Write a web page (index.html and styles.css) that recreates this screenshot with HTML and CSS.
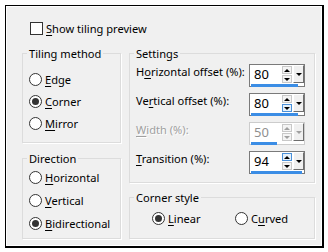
FILE: index.html
```html
<!DOCTYPE html>
<html lang="en">
<head>
  <meta charset="UTF-8" />
  <title>Tiling</title>
  <link rel="stylesheet" href="styles.css">
</head>
<body>
  <div class="dialog">
    <div class="check"><span class="box"></span><span><u>S</u>how tiling preview</span></div>

    <div class="columns">
      <div class="col col-left">
        <div class="group tiling">
          <div class="legend">Tiling method</div>
          <div class="radios">
            <div class="radio"><span class="circle"></span><span><u>E</u>dge</span></div>
            <div class="radio on"><span class="circle"></span><span><u>C</u>orner</span></div>
            <div class="radio"><span class="circle"></span><span><u>M</u>irror</span></div>
          </div>
        </div>
        <div class="group direction">
          <div class="legend">Direction</div>
          <div class="radios">
            <div class="radio"><span class="circle"></span><span><u>H</u>orizontal</span></div>
            <div class="radio"><span class="circle"></span><span><u>V</u>ertical</span></div>
            <div class="radio on"><span class="circle"></span><span><u>B</u>idirectional</span></div>
          </div>
        </div>
      </div>

      <div class="col col-right">
        <div class="group settings">
          <div class="legend">Settings</div>
          <div class="fields">
            <div class="field">
              <span class="label">H<u>o</u>rizontal offset (%):</span>
              <div class="spin">
                <div class="spin-top">
                  <span class="spin-value">80</span>
                  <span class="spin-arrows"><span class="btn"><i class="up"></i></span><span class="btn"><i class="down"></i></span></span>
                  <span class="spin-drop"><i class="down"></i></span>
                </div>
                <div class="spin-bar" style="width: 47px"></div>
              </div>
            </div>
            <div class="field">
              <span class="label">Ve<u>r</u>tical offset (%):</span>
              <div class="spin">
                <div class="spin-top">
                  <span class="spin-value">80</span>
                  <span class="spin-arrows"><span class="btn"><i class="up"></i></span><span class="btn hot"><i class="down"></i></span></span>
                  <span class="spin-drop"><i class="down"></i></span>
                </div>
                <div class="spin-bar" style="width: 47px"></div>
              </div>
            </div>
            <div class="field disabled">
              <span class="label"><u>W</u>idth (%):</span>
              <div class="spin">
                <div class="spin-top">
                  <span class="spin-value">50</span>
                  <span class="spin-arrows"><span class="btn"><i class="up"></i></span><span class="btn"><i class="down"></i></span></span>
                  <span class="spin-drop"><i class="down"></i></span>
                </div>
                <div class="spin-bar" style="width: 26px"></div>
              </div>
            </div>
            <div class="field">
              <span class="label"><u>T</u>ransition (%):</span>
              <div class="spin">
                <div class="spin-top">
                  <span class="spin-value">94</span>
                  <span class="spin-arrows"><span class="btn hot"><i class="up"></i></span><span class="btn"><i class="down"></i></span></span>
                  <span class="spin-drop"><i class="down"></i></span>
                </div>
                <div class="spin-bar" style="width: 51px"></div>
              </div>
            </div>
          </div>
        </div>
        <div class="group corner">
          <div class="legend">Corner style</div>
          <div class="radios row">
            <div class="radio on"><span class="circle"></span><span><u>L</u>inear</span></div>
            <div class="radio"><span class="circle"></span><span>C<u>u</u>rved</span></div>
          </div>
        </div>
      </div>
    </div>
  </div>
</body>
</html>
```

FILE: styles.css
```css
* {
  box-sizing: border-box;
}

body {
  margin: 0;
  background: #fff;
  font-family: "Noto Sans", "Open Sans", sans-serif;
  font-size: 11.1px;
  color: #000;
  white-space: nowrap;
}

u {
  text-decoration-thickness: 1px;
  text-underline-offset: 2px;
}

.dialog {
  margin: 5px 0 0 5px;
  width: 319px;
  height: 243px;
  background: #f0f0f0;
  border: solid #000;
  border-width: 1px 2px 2px 1px;
  box-shadow: inset 1px 1px 0 #fff, inset -1px -1px 0 #fff;
  padding: 16px 0 0 16px;
}

.check {
  display: flex;
  align-items: center;
  gap: 3px;
  height: 13px;
  padding-left: 8px;
}

.box {
  width: 13px;
  height: 13px;
  border: 1px solid #333;
  background: #fff;
}

.columns {
  display: flex;
  gap: 8px;
  margin-top: 18px;
}

.col {
  display: flex;
  flex-direction: column;
}

.col-left {
  width: 99px;
  gap: 15px;
}

.col-right {
  width: 186px;
  gap: 14px;
}

.group {
  border: 1px solid #dcdcdc;
  box-shadow: 1px 1px 0 #fff;
}

.tiling { height: 90px; }
.direction { height: 81px; }
.settings { height: 130px; }
.corner { height: 42px; }

.legend {
  display: table;
  margin: -7px 0 0 4px;
  padding: 0 2px;
  line-height: 14px;
  background: #f0f0f0;
}

.radios {
  display: flex;
  flex-direction: column;
  padding-left: 6px;
}

.tiling .radios { margin-top: 7px; }
.direction .radio { height: 23px; }

.radio {
  display: flex;
  align-items: center;
  gap: 3px;
  height: 22px;
}

.circle {
  width: 13px;
  height: 13px;
  border: 1px solid #333;
  border-radius: 50%;
  background: #fff;
  display: flex;
  align-items: center;
  justify-content: center;
}

.radio.on .circle::after {
  content: "";
  width: 7px;
  height: 7px;
  border-radius: 50%;
  background: #333;
}

.radios.row {
  flex-direction: row;
  margin-top: 2px;
  padding-left: 22px;
}

.radios.row .radio:first-child {
  width: 83px;
}

/* settings fields */
.fields {
  display: flex;
  flex-direction: column;
  gap: 6px;
  margin-top: 3px;
  padding: 0 9px 0 6px;
}

.field {
  display: flex;
  align-items: flex-start;
  justify-content: space-between;
}

.label {
  line-height: 16px;
}

.spin {
  width: 56px;
  height: 23px;
  border: 1px solid #7a7a7a;
  background: #fff;
}

.spin-top {
  display: flex;
  height: 18px;
}

.spin-value {
  flex: 1;
  padding-left: 4px;
  font-size: 13px;
  line-height: 19px;
}

.spin-arrows {
  width: 10px;
  display: flex;
  flex-direction: column;
  gap: 1px;
  padding-top: 1px;
  margin-right: 1px;
}

.spin-arrows .btn {
  height: 8px;
  border: 1px solid #c8c8c8;
  background: #f4f4f4;
  display: flex;
  align-items: center;
  justify-content: center;
}

.spin-arrows .btn.hot {
  border-color: #4a90d9;
  background: #e5f1fb;
}

.spin-drop {
  width: 11px;
  background: #f0f0f0;
  border: solid;
  border-width: 1px;
  border-color: #fff #6d6d6d #6d6d6d #fff;
  display: flex;
  align-items: center;
  justify-content: center;
}

i.up, i.down {
  width: 0;
  height: 0;
  border-left: 3px solid transparent;
  border-right: 3px solid transparent;
}

i.up { border-bottom: 3px solid #000; }
i.down { border-top: 3px solid #000; }

.spin-bar {
  height: 3px;
  margin: 1px 0 0 1px;
  background: #3b8de5;
}

.disabled .label {
  color: #a0a0a0;
  text-shadow: 1px 1px 0 #fff;
}

.disabled .spin {
  border-color: #cccccc;
}

.disabled .spin-value {
  color: #8f8f8f;
}

.disabled i.up { border-bottom-color: #a0a0a0; }
.disabled i.down { border-top-color: #a0a0a0; }
```
